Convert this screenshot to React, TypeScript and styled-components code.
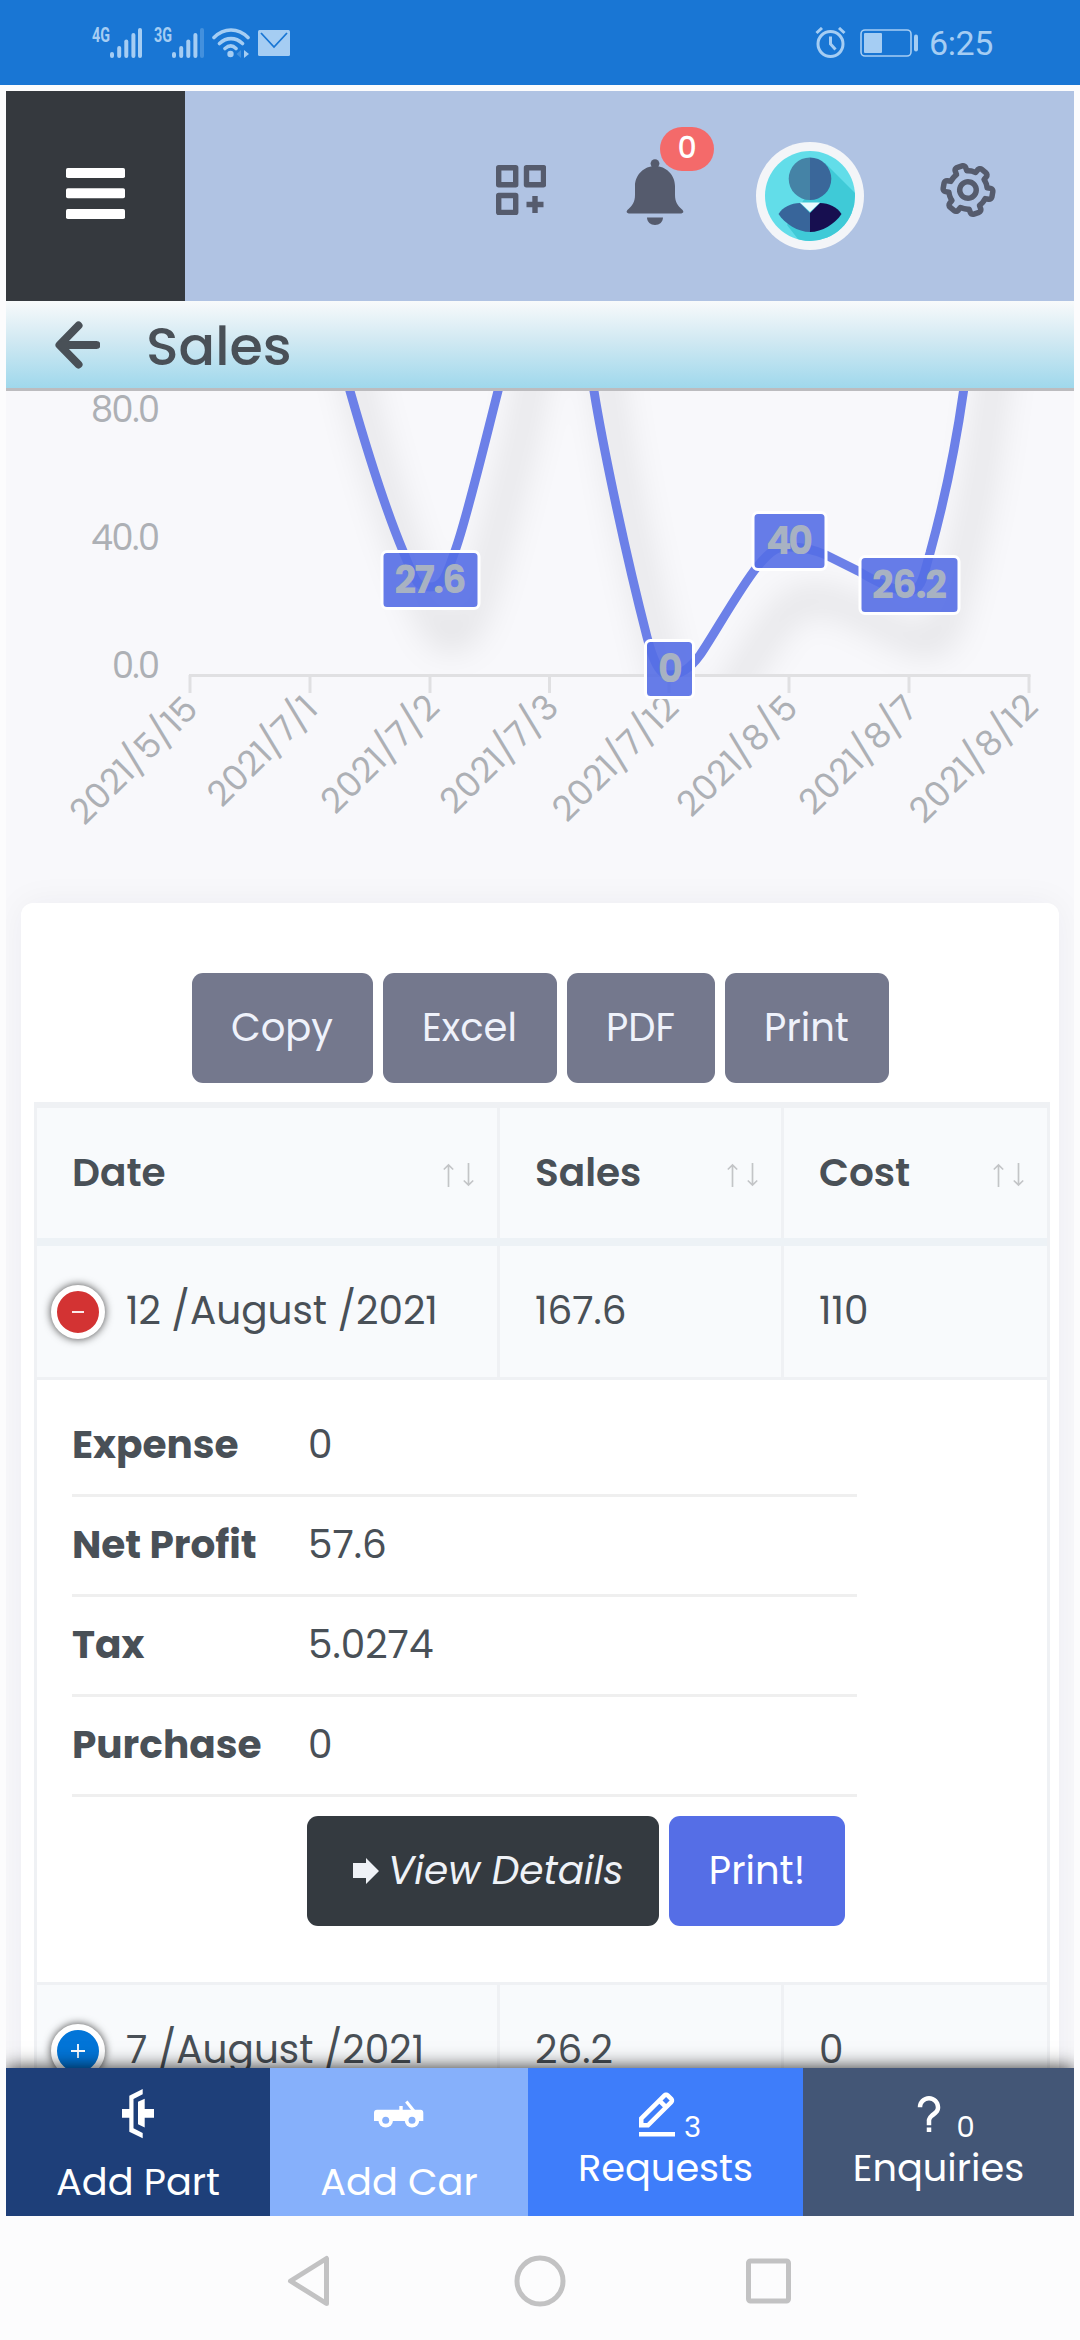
import React from 'react';
import styled, { createGlobalStyle, css } from 'styled-components';
import { BiCog, BiEditAlt, BiQuestionMark } from 'react-icons/bi';

const GlobalStyle = createGlobalStyle`
  *, *::before, *::after { box-sizing: border-box; }
  body {
    margin: 0;
    background: #fcfcfd;
    color: #495057;
    font-family: Poppins, Inter, 'Noto Sans', sans-serif;
    font-size: 38.3px;
  }
  svg { display: block; flex: none; }
`;

const Screen = styled.div`
  width: 1080px;
  height: 2340px;
  display: flex;
  flex-direction: column;
  overflow: hidden;
  background: #fcfcfd;
`;

/* ---------- status bar ---------- */

const StatusBar = styled.header`
  height: 85px;
  flex: none;
  display: flex;
  justify-content: space-between;
  padding: 0 87px 0 92px;
  background: #1976d4;
  color: #a5cdf3;
`;

const StatusGroup = styled.div`
  display: flex;
  align-items: center;
`;

const NetworkText = styled.text`
  font-family: Roboto, sans-serif;
  font-size: 19.5px;
  font-weight: 700;
  fill: currentColor;
`;

const SignalIcon = styled.svg`
  margin-right: 12px;
  overflow: visible;
`;

const WifiIcon = styled.svg`
  margin: 0 8px 0 -4px;
`;

const BatteryIcon = styled.svg`
  margin: 0 10px 0 14px;
`;

const Clock = styled.span`
  font-family: Roboto, sans-serif;
  font-size: 34px;
  line-height: 40px;
  letter-spacing: -0.4px;
`;

/* ---------- app frame ---------- */

const Shell = styled.main`
  flex: 1;
  min-height: 0;
  display: flex;
  flex-direction: column;
  margin: 6px 6px 0;
`;

const TopBar = styled.div`
  height: 210px;
  flex: none;
  display: flex;
  background: #b0c3e3;
  color: #555b6d;
`;

const MenuButton = styled.button`
  width: 179px;
  border: 0;
  padding: 0;
  display: flex;
  align-items: center;
  justify-content: center;
  background: #35393e;
  color: #fff;
`;

const MenuIcon = styled.svg`
  margin-bottom: 5px;
`;

const TopActions = styled.div`
  flex: 1;
  display: flex;
  align-items: center;
  padding-left: 311px;
`;

const AppsIcon = styled.svg`
  margin-bottom: 12px;
`;

const Notifications = styled.div`
  position: relative;
  margin: 0 72px 8px 80px;
`;

const NotificationBadge = styled.span`
  position: absolute;
  left: 34px;
  top: -32px;
  width: 54px;
  height: 44px;
  border-radius: 22px;
  background: #f46a6a;
  color: #fff;
  font-size: 30px;
  font-weight: 500;
  line-height: 41px;
  text-align: center;
`;

const Avatar = styled.div`
  width: 108px;
  height: 108px;
  padding: 9px;
  border-radius: 50%;
  background: #f3f5f8;
`;

const SettingsIcon = styled(BiCog)`
  width: 66px;
  height: 66px;
  margin: 0 0 12px 71px;
  transform: rotate(-20deg);
`;

const TitleBar = styled.div`
  height: 90px;
  flex: none;
  display: flex;
  align-items: center;
  padding: 1px 0 0 46px;
  border-bottom: 3px solid #bcbcbf;
  background: linear-gradient(#f8fafb, #d4eaf3 42%, #9fd8ec);
`;

const PageTitle = styled.h1`
  margin: 1px 0 0 46px;
  font-size: 54px;
  font-weight: 500;
  line-height: 60px;
  color: #495057;
`;

const Content = styled.div`
  flex: 1;
  min-height: 0;
  overflow: hidden;
  background: #f8f8fb;
`;

/* ---------- table card ---------- */

const Card = styled.section`
  margin: 0 15px;
  height: 1400px;
  padding: 70px 9px 0 13px;
  border-radius: 12px;
  background: #fff;
  box-shadow: 0 0 34px rgba(30, 30, 50, 0.05);
`;

const Toolbar = styled.div`
  display: flex;
  justify-content: center;
  gap: 10px;
  padding-right: 4px;
  margin-bottom: 19px;
`;

const buttonBase = css`
  height: 110px;
  border: 0;
  padding: 0;
  border-radius: 11px;
  font-family: inherit;
  font-size: 38.5px;
  line-height: 46px;
`;

const ExportButton = styled.button<{ $width: number }>`
  ${buttonBase}
  width: ${(p) => p.$width}px;
  background: #74788d;
  color: #eff2fb;
`;

const Table = styled.div`
  border: 3px solid #eff1f4;
  border-top-width: 6px;
  font-size: 39px;
`;

const TableRow = styled.div<{ $head?: boolean }>`
  display: grid;
  grid-template-columns: 463px 284px 1fr;
  height: ${(p) => (p.$head ? 138 : 134)}px;
  border-bottom: ${(p) => (p.$head ? '8px solid #edf2f6' : '3px solid #eff1f4')};
  background: #f8fafc;
`;

const Cell = styled.div`
  display: flex;
  align-items: center;
  padding: 0 0 2px 35px;
  border-right: 3px solid #eff1f4;
  &:last-child { border-right: 0; }
`;

const HeadCell = styled(Cell)`
  justify-content: space-between;
  padding-right: 22px;
  font-weight: 600;
  svg { margin-top: 6px; }
`;

const DateCell = styled(Cell)`
  padding-left: 14px;
  gap: 21px;
`;

const Toggle = styled.span<{ $open?: boolean }>`
  width: 54px;
  height: 54px;
  flex: none;
  display: flex;
  align-items: center;
  justify-content: center;
  margin-top: 2px;
  border: 6px solid #fff;
  border-radius: 50%;
  background: ${(p) => (p.$open ? '#d33333' : '#0275d8')};
  box-shadow: 0 0 9px #444;
`;

const Details = styled.div`
  height: 605px;
  padding: 17px 0 0 35px;
  border-bottom: 3px solid #eff1f4;
`;

const DetailRow = styled.div`
  width: 785px;
  height: 100px;
  display: grid;
  grid-template-columns: 236px 1fr;
  align-items: center;
  padding-bottom: 3px;
  border-bottom: 3px solid #efefef;
`;

const DetailLabel = styled.span`
  font-weight: 700;
`;

const DetailActions = styled.div`
  display: flex;
  gap: 10px;
  margin: 19px 0 0 235px;
`;

const ViewButton = styled.button`
  ${buttonBase}
  width: 352px;
  display: flex;
  align-items: center;
  padding-left: 46px;
  gap: 9px;
  background: #343a40;
  color: #eff2f7;
  font-size: 39px;
  font-style: italic;
`;

const PrintButton = styled.button`
  ${buttonBase}
  width: 176px;
  background: #556ee6;
  color: #fff;
`;

/* ---------- bottom bars ---------- */

const BottomNav = styled.nav`
  height: 148px;
  flex: none;
  display: grid;
  grid-template-columns: 264px 258px 275px 271px;
  box-shadow: 0 0 18px rgba(0, 0, 0, 0.85);
  clip-path: inset(-40px 0 0 0);
`;

const NavItem = styled.a<{ $color: string }>`
  display: flex;
  flex-direction: column;
  align-items: center;
  background: ${(p) => p.$color};
  color: #fff;
`;

const NavIcon = styled.div`
  height: 91px;
  display: flex;
  align-items: center;
`;

const NavCounter = styled.div`
  height: 77px;
  display: flex;
  align-items: flex-start;
  padding-top: 19px;
  svg { width: 54px; height: 54px; }
`;

const Count = styled.sub`
  margin-top: 25px;
  font-size: 29px;
  line-height: 30px;
`;

const NavLabel = styled.span`
  line-height: 46px;
`;

const SystemNav = styled.footer`
  height: 124px;
  flex: none;
  display: flex;
  align-items: center;
  padding: 5px 0 0 287px;
`;

const SystemIcon = styled.svg<{ $gap?: number }>`
  margin-left: ${(p) => p.$gap ?? 0}px;
  fill: none;
  stroke: #c2c2c3;
  stroke-width: 5px;
  stroke-linejoin: round;
`;

/* ---------- drawings ---------- */

const Signal = ({ label, weak }: { label: string; weak?: boolean }) => (
  <SignalIcon width="50" height="30" viewBox="-18 0 50 30" fill="currentColor">
    <NetworkText x="-18" y="14" textLength="18" lengthAdjust="spacingAndGlyphs">{label}</NetworkText>
    <rect x="0" y="24" width="4" height="6" rx="2" />
    <rect x="7.2" y="18" width="4" height="12" rx="2" />
    <rect x="14.3" y="11.5" width="4" height="18.5" rx="2" />
    <rect x="21.4" y="5" width="4" height="25" rx="2" />
    <rect x="28" y="0" width="4" height="30" rx="2" opacity={weak ? 0.3 : 1} />
  </SignalIcon>
);

const SortArrows = () => (
  <svg width="32" height="24" viewBox="0 0 32 24" fill="none" stroke="#c3c5c7" strokeWidth="1.7">
    <path d="M5.500 24V2M.800 6.500 5.500 2 10.200 6.500M25.500 0V22M20.800 17.500l4.700 4.500 4.700-4.500" />
  </svg>
);

const Bell = () => (
  <svg width="58" height="66" viewBox="0 0 58 66" fill="currentColor">
    <circle cx="29" cy="4.600" r="4.400" />
    <path d="M29 7C18 7 9 16 9 27v9c0 7-3 11-6.500 14C-1 53 1 54.500 4 54.500h50c3 0 5-1.500 1.500-4.500C52 47 49 43 49 36v-9C49 16 40 7 29 7Z" />
    <path d="M21 58.500h16c0 4.500-3.500 7.500-8 7.500s-8-3-8-7.500Z" />
  </svg>
);

const Portrait = () => (
  <svg width="90" height="90" viewBox="0 0 90 90">
    <defs>
      <clipPath id="face"><circle cx="45" cy="45" r="45" /></clipPath>
    </defs>
    <g clipPath="url(#face)">
      <rect width="90" height="90" fill="#62dde9" />
      <path d="M60 12 92 44V92H36L22 74l20-30Z" fill="#3fcad7" />
      <path d="M45 6.500a21.300 21.300 0 0 0 0 42.600Z" fill="#4583a6" />
      <path d="M45 6.500a21.300 21.300 0 0 1 0 42.600Z" fill="#3a679a" />
      <path d="M35 52 45 62V81C33 81 20 73 13.500 63 18 56 26 52 35 52Z" fill="#38659a" />
      <path d="M55 52 45 62V81C57 81 70 73 76.500 63 72 56 64 52 55 52Z" fill="#170f50" />
      <path d="M35 51.500h20L45 61Z" fill="#e9fbfd" />
    </g>
  </svg>
);

const points = [
  { text: '27.6', x: 383.5, y: 553, w: 94, tw: 72 },
  { text: '0', x: 647, y: 642, w: 45, tw: 23 },
  { text: '40', x: 754.5, y: 514, w: 70, tw: 47 },
  { text: '26.2', x: 861.5, y: 558, w: 96, tw: 75 },
];

const dates = [
  { text: '2021/5/15', x: 84.5, y: 826.5, len: 163 },
  { text: '2021/7/1', x: 222, y: 808.5, len: 138 },
  { text: '2021/7/2', x: 335.5, y: 815.5, len: 150 },
  { text: '2021/7/3', x: 454.5, y: 815.5, len: 150 },
  { text: '2021/7/12', x: 567, y: 823.5, len: 161 },
  { text: '2021/8/5', x: 691.5, y: 818.5, len: 153 },
  { text: '2021/8/7', x: 813.5, y: 816.5, len: 150 },
  { text: '2021/8/12', x: 924, y: 825, len: 164 },
];

const salesLine =
  'M310 210C328 300 337 345 350 391C372 468 390 520 403 551S416 587 430 587S447 573 455 551' +
  'C466 521 483 450 498 391C516 310 530 180 549 180S580 310 594 391C601 435 622 540 647 637' +
  'C652 656 658 675 669 675C679 675 690 669 700 655C712 638 740 588 757 567S780 547 789 547' +
  'C800 547 815 550 826 555L858 571C880 584 895 591 909 591S924 572 930 553C941 513 954 458 963.500 391C975 300 990 180 1029 139';

const ticks = [190, 310, 430, 549.5, 669, 789, 909, 1029];

const AxisText = styled.text`
  fill: #adb0b5;
  font-size: 35px;
`;

const PointText = styled.text`
  fill: #a8b2c2;
  font-size: 38px;
  font-weight: 700;
`;

const SalesChart = () => (
  <svg width="1068" height="512" viewBox="6 391 1068 512">
    <defs>
      <filter id="soft" x="-10%" y="-10%" width="120%" height="130%">
        <feGaussianBlur stdDeviation="17" />
      </filter>
      <clipPath id="plot"><rect x="190" y="391" width="860" height="284" /></clipPath>
    </defs>
    <g clipPath="url(#plot)">
      <path d={salesLine} transform="translate(22 52)" fill="none" stroke="#000" strokeOpacity="0.16" strokeWidth="13" filter="url(#soft)" />
    </g>
    <g stroke="#e0e0e2" strokeWidth="3">
      <path d="M189 675.500H1030.500" />
      {ticks.map((x) => <path key={x} d={`M${x} 675V693`} />)}
    </g>
    <AxisText x="91" y="421.500" textLength="69">80.0</AxisText>
    <AxisText x="91" y="549.500" textLength="69">40.0</AxisText>
    <AxisText x="112" y="677.500" textLength="48">0.0</AxisText>
    {dates.map((d) => (
      <AxisText key={d.text} transform={`translate(${d.x} ${d.y}) rotate(-45)`} textLength={d.len}>{d.text}</AxisText>
    ))}
    <path d={salesLine} fill="none" stroke="#6c80e8" strokeWidth="9" />
    {points.map((p) => (
      <g key={p.text}>
        <rect x={p.x - 1.5} y={p.y - 1.5} width={p.w + 3} height="57" rx="5" fill="#556ee6" fillOpacity="0.9" stroke="#fff" strokeWidth="3" />
        <PointText x={p.x + (p.w - p.tw) / 2} y={p.y + 40} textLength={p.tw}>{p.text}</PointText>
      </g>
    ))}
  </svg>
);

const PartIcon = () => (
  <svg width="32" height="50" viewBox="122 2089 32 50" fill="#fff">
    <path d="M142.700 2089V2094.200L133.500 2099V2128.300L142.700 2132.900V2138.300L129.300 2131.700V2117.700H122V2109H129.300V2095.700Z" />
    <path d="M138 2101.700 144.700 2098.700V2109H154V2117.700H144.700V2127.500L138 2124.300Z" />
  </svg>
);

const CarIcon = () => (
  <svg width="50" height="28" viewBox="374 2099 50 28" fill="#fff">
    <path d="M377 2108.700h22.300v-3.700h3.400v3.700h18c1.500 0 2.600 1.200 2.600 3V2120H374v-8.300c0-1.800 1.200-3 3-3Z" />
    <path d="m406.300 2100.500 8 10" stroke="#fff" strokeWidth="3" />
    {[385.7, 412].map((x) => (
      <g key={x}>
        <circle cx={x} cy="2119.300" r="7.300" />
        <circle cx={x} cy="2119.300" r="3.500" fill="#86b0fb" />
      </g>
    ))}
  </svg>
);

/* ---------- page ---------- */

const exportsList = [
  { label: 'Copy', width: 181 },
  { label: 'Excel', width: 174 },
  { label: 'PDF', width: 148 },
  { label: 'Print', width: 164 },
];

const details = [
  { label: 'Expense', value: '0' },
  { label: 'Net Profit', value: '57.6' },
  { label: 'Tax', value: '5.0274' },
  { label: 'Purchase', value: '0' },
];

export default function App() {
  return (
    <Screen>
      <GlobalStyle />
      <StatusBar>
        <StatusGroup>
          <Signal label="4G" />
          <Signal label="3G" weak />
          <WifiIcon width="38" height="30" viewBox="0 0 38 30" fill="none" stroke="currentColor" strokeWidth="3.600" strokeLinecap="round">
            <path d="M2 9.500C12-.5 26-.5 36 9.500M7.500 15.500c7-6.500 16-6.500 23 0M13 20.500c4-3.500 7.500-3.500 11 0" />
            <circle cx="18.500" cy="26" r="3.200" fill="currentColor" stroke="none" />
            <path d="m32 22 5 4-5 4Z" fill="currentColor" stroke="none" />
            <path d="m29 22-4.500 4 4.500 4Z" fill="currentColor" stroke="none" opacity="0.3" />
          </WifiIcon>
          <svg width="32" height="26" viewBox="0 0 32 26">
            <rect width="32" height="26" rx="1.500" fill="currentColor" />
            <path d="M3 3 16 17 29 3" fill="none" stroke="#1976d4" strokeWidth="1.800" />
          </svg>
        </StatusGroup>
        <StatusGroup>
          <svg width="31" height="31" viewBox="0 0 31 31" fill="none" stroke="currentColor" strokeWidth="3">
            <circle cx="15.500" cy="17" r="12.500" />
            <path d="M15.500 9.500V17l5 5.500M1.500 6 7 1M29.500 6 24 1" />
          </svg>
          <BatteryIcon width="59" height="28" viewBox="0 0 59 28">
            <rect x="1" y="1" width="50" height="26" rx="4" fill="none" stroke="currentColor" strokeWidth="1.600" />
            <rect x="4" y="4" width="18" height="20" rx="1" fill="currentColor" />
            <rect x="54" y="5.500" width="4" height="17" rx="2" fill="currentColor" />
          </BatteryIcon>
          <Clock>6:25</Clock>
        </StatusGroup>
      </StatusBar>

      <Shell>
        <TopBar>
          <MenuButton>
            <MenuIcon width="59" height="51" viewBox="0 0 59 51" fill="currentColor">
              <rect width="59" height="10" rx="1.800" />
              <rect y="20.300" width="59" height="10" rx="1.800" />
              <rect y="41" width="59" height="10" rx="1.800" />
            </MenuIcon>
          </MenuButton>
          <TopActions>
            <AppsIcon width="50" height="50" viewBox="0 0 50 50" fill="none" stroke="currentColor" strokeWidth="5.400" strokeLinejoin="round">
              <path d="M2.700 2.700h17v17h-17ZM30.500 2.700h17v17h-17ZM2.700 30.500h17v17h-17ZM30.500 39.500h17M39 31v17" />
            </AppsIcon>
            <Notifications>
              <Bell />
              <NotificationBadge>0</NotificationBadge>
            </Notifications>
            <Avatar><Portrait /></Avatar>
            <SettingsIcon />
          </TopActions>
        </TopBar>

        <TitleBar>
          <svg width="48" height="48" viewBox="0 0 48 48" fill="none" stroke="#495057" strokeWidth="8" strokeLinecap="round" strokeLinejoin="round">
            <path d="M26.500 4.500 7.500 24l19 19.500" />
            <path d="M10 24h34.500" />
          </svg>
          <PageTitle>Sales</PageTitle>
        </TitleBar>

        <Content>
          <SalesChart />
          <Card>
            <Toolbar>
              {exportsList.map((b) => (
                <ExportButton key={b.label} $width={b.width}>{b.label}</ExportButton>
              ))}
            </Toolbar>
            <Table>
              <TableRow $head>
                <HeadCell>Date<SortArrows /></HeadCell>
                <HeadCell>Sales<SortArrows /></HeadCell>
                <HeadCell>Cost<SortArrows /></HeadCell>
              </TableRow>
              <TableRow>
                <DateCell>
                  <Toggle $open>
                    <svg width="12" height="2" viewBox="0 0 12 2"><path d="M0 1h12" stroke="#fff" strokeWidth="1.800" /></svg>
                  </Toggle>
                  12 /August /2021
                </DateCell>
                <Cell>167.6</Cell>
                <Cell>110</Cell>
              </TableRow>
              <Details>
                {details.map((d) => (
                  <DetailRow key={d.label}>
                    <DetailLabel>{d.label}</DetailLabel>
                    <span>{d.value}</span>
                  </DetailRow>
                ))}
                <DetailActions>
                  <ViewButton>
                    <svg width="26" height="26" viewBox="0 0 26 26" fill="currentColor"><path d="M0 5h13V0l13 13-13 13v-6H0Z" /></svg>
                    View Details
                  </ViewButton>
                  <PrintButton>Print!</PrintButton>
                </DetailActions>
              </Details>
              <TableRow>
                <DateCell>
                  <Toggle>
                    <svg width="14" height="14" viewBox="0 0 14 14"><path d="M0 7h14M7 0v14" stroke="#fff" strokeWidth="1.800" /></svg>
                  </Toggle>
                  7 /August /2021
                </DateCell>
                <Cell>26.2</Cell>
                <Cell>0</Cell>
              </TableRow>
            </Table>
          </Card>
        </Content>

        <BottomNav>
          <NavItem $color="#1e3f79">
            <NavIcon><PartIcon /></NavIcon>
            <NavLabel>Add Part</NavLabel>
          </NavItem>
          <NavItem $color="#86b0fb">
            <NavIcon><CarIcon /></NavIcon>
            <NavLabel>Add Car</NavLabel>
          </NavItem>
          <NavItem $color="#3e7dfa">
            <NavCounter><BiEditAlt /><Count>3</Count></NavCounter>
            <NavLabel>Requests</NavLabel>
          </NavItem>
          <NavItem $color="#435676">
            <NavCounter><BiQuestionMark /><Count>0</Count></NavCounter>
            <NavLabel>Enquiries</NavLabel>
          </NavItem>
        </BottomNav>
      </Shell>

      <SystemNav>
        <SystemIcon width="44" height="52" viewBox="0 0 44 52"><path d="M39.500 3.500v45L3.500 26Z" /></SystemIcon>
        <SystemIcon $gap={183} width="52" height="52" viewBox="0 0 52 52"><circle cx="26" cy="26" r="23" /></SystemIcon>
        <SystemIcon $gap={179} width="47" height="48" viewBox="0 0 47 48"><rect x="3.500" y="4" width="40" height="40" rx="2" /></SystemIcon>
      </SystemNav>
    </Screen>
  );
}
